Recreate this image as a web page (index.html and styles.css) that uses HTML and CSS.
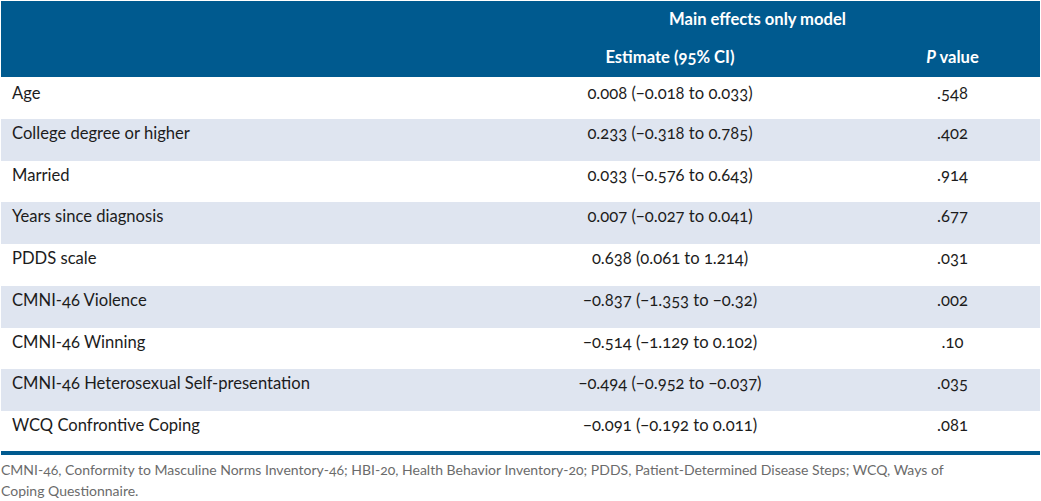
FILE: index.html
```html
<!DOCTYPE html>
<html lang="en">
<head>
<meta charset="utf-8">
<title>Main effects only model</title>
<link rel="stylesheet" href="styles.css">
</head>
<body>
<table class="results">
  <colgroup>
    <col class="c-label">
    <col class="c-est">
    <col class="c-p">
  </colgroup>
  <thead>
    <tr class="h1">
      <th></th>
      <th colspan="2">Main effects only model</th>
    </tr>
    <tr class="h2">
      <th></th>
      <th>Estimate (95% CI)</th>
      <th><i>P</i> value</th>
    </tr>
  </thead>
  <tbody>
    <tr><td>Age</td><td>0.008 (−0.018 to 0.033)</td><td>.548</td></tr>
    <tr><td>College degree or higher</td><td>0.233 (−0.318 to 0.785)</td><td>.402</td></tr>
    <tr><td>Married</td><td>0.033 (−0.576 to 0.643)</td><td>.914</td></tr>
    <tr><td>Years since diagnosis</td><td>0.007 (−0.027 to 0.041)</td><td>.677</td></tr>
    <tr><td>PDDS scale</td><td>0.638 (0.061 to 1.214)</td><td>.031</td></tr>
    <tr><td>CMNI-46 Violence</td><td>−0.837 (−1.353 to −0.32)</td><td>.002</td></tr>
    <tr><td>CMNI-46 Winning</td><td>−0.514 (−1.129 to 0.102)</td><td>.10</td></tr>
    <tr><td>CMNI-46 Heterosexual Self-presentation</td><td>−0.494 (−0.952 to −0.037)</td><td>.035</td></tr>
    <tr><td>WCQ Confrontive Coping</td><td>−0.091 (−0.192 to 0.011)</td><td>.081</td></tr>
  </tbody>
</table>
<p class="note">CMNI-46, Conformity to Masculine Norms Inventory-46; HBI-20, Health Behavior Inventory-20; PDDS, Patient-Determined Disease Steps; WCQ, Ways of Coping Questionnaire.</p>
</body>
</html>
```
FILE: styles.css
```css
html, body {
  margin: 0;
  padding: 0;
  background: #ffffff;
}
body {
  padding: 1px 1px 0 1px;
  font-family: Lato, "Open Sans", "Liberation Sans", sans-serif;
  font-variant-numeric: oldstyle-nums;
  color: #1c1c1c;
}
.results {
  width: 1039px;
  border-collapse: collapse;
  table-layout: fixed;
  font-size: 16.6px;
  border-bottom: 4px solid #005a8f;
}
.c-label { width: 474px; }
.c-est { width: 390px; }
.c-p { width: 175px; }
.results thead tr {
  background: #005a8f;
  color: #ffffff;
}
.results th {
  font-weight: 700;
  text-align: center;
  line-height: 20px;
  vertical-align: top;
  box-sizing: border-box;
}
.results .h1 th { height: 37px; padding: 8px 0 0 0; }
.results .h2 th { height: 39px; padding: 9px 0 0 0; }
.results td {
  height: 41.78px;
  box-sizing: border-box;
  padding: 4px 0 0 0;
  line-height: 20px;
  vertical-align: top;
  text-align: center;
}
.results tbody tr:first-child td {
  padding-top: 6px;
}
.results td:first-child {
  text-align: left;
  padding-left: 11px;
}
.results tbody tr:nth-child(even) {
  background: #dfe5f0;
}
.note {
  margin: 4px 0 0 0;
  max-width: 955px;
  font-size: 14px;
  line-height: 21px;
  color: #6b6b6b;
}
```
